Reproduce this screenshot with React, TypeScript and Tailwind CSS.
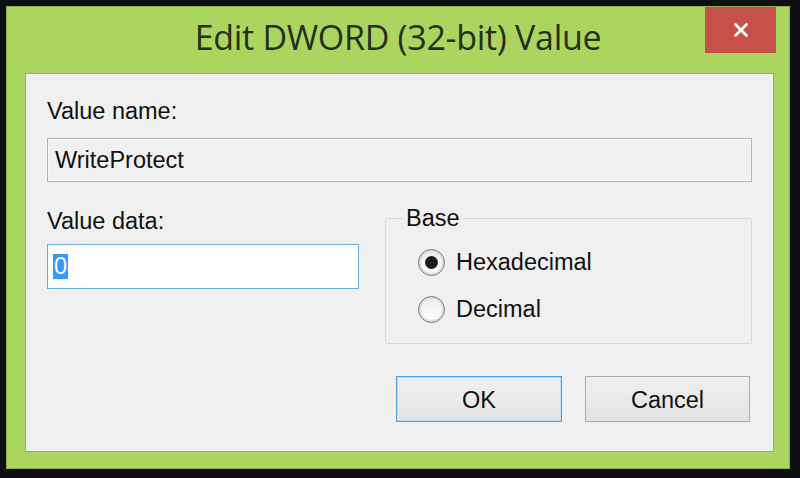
import { X } from 'lucide-react';

interface RadioProps {
  label: string;
  checked?: boolean;
}

const Radio = ({ label, checked }: RadioProps) => (
  <div className="flex items-center h-[26px]">
    <div className="w-[27px] h-[27px] rounded-full border border-[#777] bg-gradient-to-b from-[#ececec] to-white shadow-[inset_0_0_0_2px_#dedede] flex items-center justify-center">
      {checked && <div className="w-[13px] h-[13px] rounded-full bg-[#1a1a1a]" />}
    </div>
    <span className="ml-[11px] leading-[26px]">{label}</span>
  </div>
);

const App = () => {
  return (
    <div className="w-[800px] h-[478px] bg-[#0e0e0e] pt-[6px] pl-[6px] pr-[10px] pb-[9px] font-['Liberation_Sans',Arial,sans-serif] text-[23.5px] text-[#111]">
      <div className="h-full flex flex-col bg-[#acd55f] border border-[#8cae4c]">
        {/* title bar */}
        <div className="grid grid-cols-[1fr_auto_1fr] h-[66px] shrink-0">
          <div />
          <div className="pt-[10px] leading-[40px] text-[34px] tracking-[-0.3px] text-[#25301a] font-['Open_Sans','Noto_Sans',sans-serif]">
            Edit DWORD (32-bit) Value
          </div>
          <div className="flex justify-end">
            <button className="mr-[13px] w-[71px] h-[46px] bg-[#c8504b] flex items-center justify-center">
              <X className="w-[22px] h-[22px] text-white" strokeWidth={3} />
            </button>
          </div>
        </div>

        {/* client area */}
        <div className="flex-1 ml-[18px] mr-[15px] mb-[16px] border border-[#93b553] bg-[#f0f0f0] pt-[24px] px-[21px]">
          <div className="leading-[26px]">Value name:</div>
          <div className="mt-[14px] h-[44px] border border-[#b4b4b4] shadow-[inset_0_0_0_1px_#f7f7f7] bg-[#f0f0f0] flex items-center pl-[7px]">
            <span className="leading-[26px]">WriteProtect</span>
          </div>

          <div className="mt-[23px] flex gap-[26px]">
            <div className="w-[312px]">
              <div className="mt-[3px] leading-[26px]">Value data:</div>
              <div className="mt-[10px] h-[45px] border border-[#6fa9e6] bg-white flex items-center pl-[5px]">
                <span className="leading-[25px] bg-[#3399ff] text-white px-[1px]">0</span>
              </div>
            </div>

            <fieldset className="w-[367px] h-[139px] border border-[#d9d9d9] rounded-[2px]">
              <legend className="ml-[17px] px-[3px] leading-[26px]">Base</legend>
              <div className="pl-[32px] pt-[18px] flex flex-col gap-[21px]">
                <Radio label="Hexadecimal" checked />
                <Radio label="Decimal" />
              </div>
            </fieldset>
          </div>

          <div className="mt-[32px] mr-[2px] flex justify-end gap-[23px]">
            <button className="w-[166px] h-[46px] border border-[#4f9be6] shadow-[inset_0_0_0_1px_#bcdcf8] bg-gradient-to-b from-[#f0f0f0] to-[#e4e4e4] pt-[2px] leading-[26px]">
              OK
            </button>
            <button className="w-[165px] h-[46px] border border-[#ababab] bg-gradient-to-b from-[#efefef] to-[#e3e3e3] pt-[2px] leading-[26px]">
              Cancel
            </button>
          </div>
        </div>
      </div>
    </div>
  );
};

export default App;
